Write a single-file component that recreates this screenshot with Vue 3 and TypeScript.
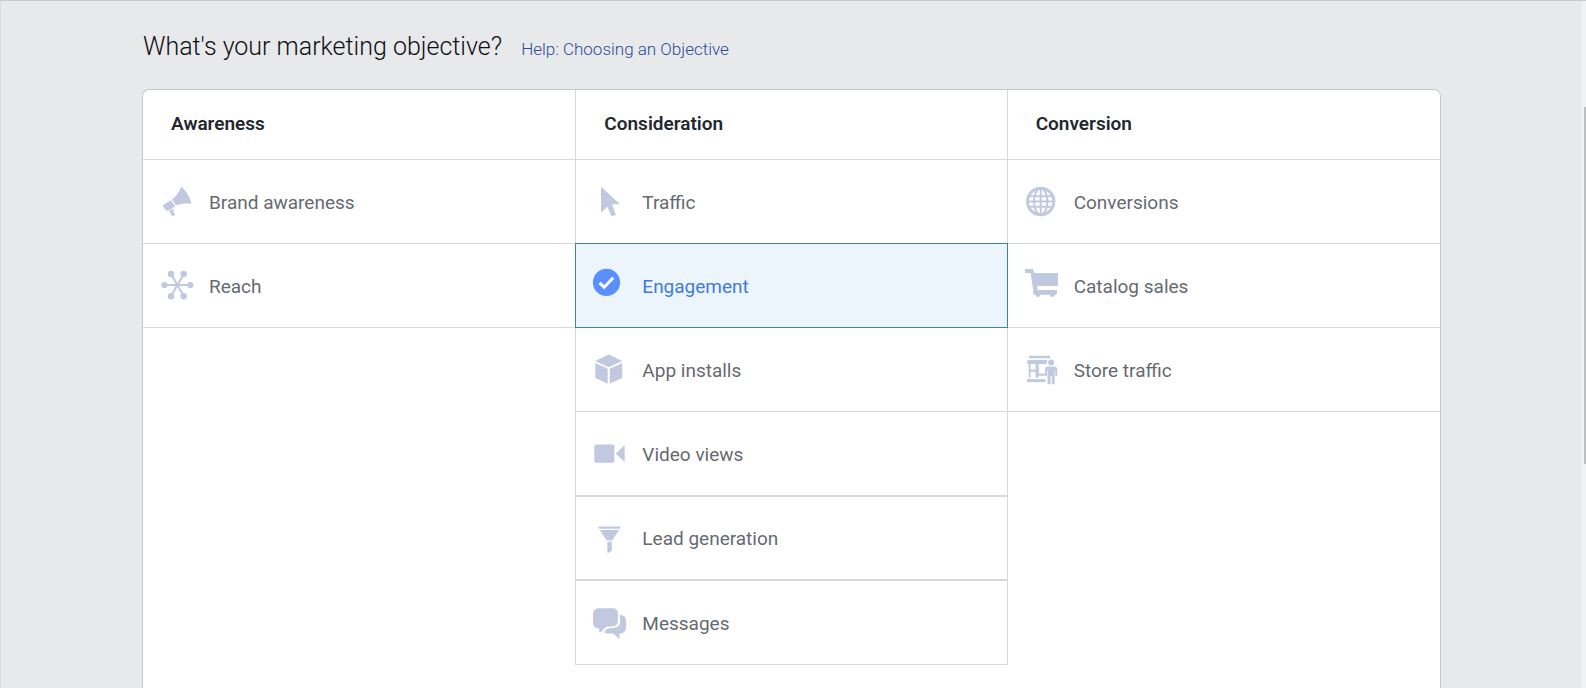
<script setup lang="ts">
import { ref } from 'vue'

interface Objective {
  id: string
  label: string
  doubleRule?: boolean
}

interface Category {
  title: string
  objectives: Objective[]
}

const categories: Category[] = [
  {
    title: 'Awareness',
    objectives: [
      { id: 'brand', label: 'Brand awareness' },
      { id: 'reach', label: 'Reach' },
    ],
  },
  {
    title: 'Consideration',
    objectives: [
      { id: 'traffic', label: 'Traffic' },
      { id: 'engagement', label: 'Engagement' },
      { id: 'app', label: 'App installs' },
      { id: 'video', label: 'Video views' },
      { id: 'lead', label: 'Lead generation', doubleRule: true },
      { id: 'messages', label: 'Messages', doubleRule: true },
    ],
  },
  {
    title: 'Conversion',
    objectives: [
      { id: 'conversions', label: 'Conversions' },
      { id: 'catalog', label: 'Catalog sales' },
      { id: 'store', label: 'Store traffic' },
    ],
  },
]

const selected = ref('engagement')
</script>

<template>
  <div class="page">
    <main class="content">
      <header class="heading">
        <h1>What's your marketing objective?</h1>
        <a href="#help">Help: Choosing an Objective</a>
      </header>

      <div class="card">
        <section v-for="category in categories" :key="category.title" class="column">
          <h2>{{ category.title }}</h2>
          <button
            v-for="item in category.objectives"
            :key="item.id"
            type="button"
            class="objective"
            :class="{ selected: item.id === selected, double: item.doubleRule }"
            :aria-pressed="item.id === selected"
            @click="selected = item.id"
          >
            <svg class="icon" viewBox="0 0 36 35" aria-hidden="true">
              <g v-if="item.id === selected">
                <circle class="disc" cx="14.5" cy="14.4" r="13.6" />
                <path class="tick" d="M7.6 14.8 12.2 19.2 21.2 9.8" />
              </g>
              <g v-else-if="item.id === 'brand'">
                <path d="M22 3.2c.6-.2 1.200 0 1.600.6 4 4.200 7.200 9.200 8.700 14.800.1.700-.3 1.100-1 1.100-4.700-.4-9.500.1-14.200 1.800L13 15.600c4-3.400 7-7.700 9-12.400z" />
                <path d="M11.900 16.200 16.300 22.400 9 26.600c-.9.500-1.800.3-2.400-.5l-2.200-3.200c-.5-.8-.4-1.700.4-2.300z" />
                <path d="M10 26.700l3.600-2 1.200 2.100-.6 1 1.800 2.500c.4.800-2.400 2.300-3 1.600z" />
              </g>
              <g v-else-if="item.id === 'reach'">
                <path class="spoke" d="M5.300 17H31.300M12 6 24.700 28M24.700 6 12 28" />
                <circle cx="5.300" cy="17" r="3.100" /><circle cx="31.300" cy="17" r="3.100" />
                <circle cx="12" cy="6" r="3.200" /><circle cx="24.700" cy="6" r="3.200" />
                <circle cx="12" cy="28.200" r="3.200" /><circle cx="24.700" cy="28.200" r="3.200" />
              </g>
              <path v-else-if="item.id === 'traffic'" d="M9 2.700 28 20.300H20L23.900 30.800 19.700 32.400 15.400 22.800 9 28.700z" />
              <g v-else-if="item.id === 'app'">
                <path d="M16.700 2.600 30.300 8.900 16.700 15.200 3.100 8.900z" />
                <path d="M3.300 11 15.700 16.800V31.700L3.300 25.900z" />
                <path d="M30.200 11 17.700 16.800V31.700L30.200 25.900z" />
              </g>
              <g v-else-if="item.id === 'video'">
                <rect x="2.300" y="8.400" width="20.100" height="18.300" rx="1.600" />
                <path d="M23.800 17.600 32 9.700q.7-.4.700.4V25q0 .8-.7.400z" />
              </g>
              <g v-else-if="item.id === 'lead'">
                <path d="M6 5.500H28.700L27.800 7.700H7z" />
                <path d="M7.700 9H27L20.300 19.200Q20 19.600 19.300 19.600H15.500Q15 19.600 14.600 19.200z" />
                <path d="M15.300 20.800H19.800V29.200L17.900 31.300Q17.500 31.700 15.300 31.700z" />
              </g>
              <g v-else-if="item.id === 'messages'">
                <path d="M7.300 3.200H20.500Q25.900 3.200 25.900 8.700V16.300Q25.900 20.800 20.500 21.200C16 21.300 13.700 21.800 12 23.500 10.800 25.300 9.500 27.100 7.600 27.500 7 27.500 7.300 26.400 7.300 23.300 3 23.200 1 21.300 1 17.400V9Q1 3.200 7.300 3.200z" />
                <path d="M28 9.900C32.500 10 34 12.200 34 16.500V22C34 26.500 31.500 28.500 27.300 28.600 27.300 31.500 28.200 33.700 27.300 33.700 24.300 32.500 22.900 28.700 20.600 28.600H15.300Q12.800 28.500 12.100 27.100C13.500 24.500 15.500 23.400 18.500 23.300 25 23.200 28 21.300 28 16.500z" />
              </g>
              <g v-else-if="item.id === 'conversions'" class="globe">
                <circle class="rim" cx="16.700" cy="17.500" r="13.200" />
                <ellipse cx="16.700" cy="17.500" rx="6.700" ry="13" />
                <path d="M16.700 4.500V30.500M4 17.500H29.400M5.500 12.300H27.900M5.500 22.800H27.900" />
              </g>
              <path
                v-else-if="item.id === 'catalog'"
                d="M1 1H9.200L10.200 4.900H34V17.900H13.200L13.700 21.900H33.200V24.200L32.300 26.700H30.800A2.400 2.400 0 0 1 26 26.700H16.200A2.400 2.400 0 0 1 11.400 26.700H10.200L9 25.500 9.400 23.500 6.600 4.900H1z"
              />
              <g v-else-if="item.id === 'store'">
                <path d="M5.300 3.700H26.200V6.200H4.700zM4.300 8H23.300L22.500 12H3.200V9.500z" />
                <path d="M4.700 12H6.600V17.500H11.600V12H14.800V21.500H20.800V23.800H14.300V25.500H11.600V19.700H6.600V25.500H4.700z" />
                <path d="M3 27.200H21.600V30.100H3z" />
                <circle cx="27.100" cy="10.500" r="3" />
                <path d="M24.200 14.600H30Q33.200 14.600 33.200 18V24H31.300V18.500H30.700V32.200H27.800V24.200H26.500V32.200H23.600V18.500H23V24H21.100V18Q21.100 14.600 24.200 14.600z" />
              </g>
            </svg>
            <span>{{ item.label }}</span>
          </button>
        </section>
      </div>
    </main>
    <div class="scroll-track"><div class="scroll-thumb"></div></div>
  </div>
</template>

<style>
body {
  margin: 0;
}
</style>

<style scoped>
.page {
  display: flex;
  box-sizing: border-box;
  height: 100vh;
  overflow: hidden;
  border-top: 1px solid #c8c9cb;
  border-left: 1px solid #d9dadc;
  background: #e8e9eb;
  font-family: Roboto, "Liberation Sans", sans-serif;
}

.content {
  display: flex;
  flex: 1;
  flex-direction: column;
  width: calc(100% - 52px);
  max-width: 1299px;
  margin: 0 auto;
}

.heading {
  display: flex;
  flex: none;
  align-items: baseline;
  gap: 19px;
  padding: 30px 0 26px 1px;
}

h1 {
  margin: 0;
  color: #0e1013;
  font-size: 25px;
  font-weight: 300;
  line-height: 32px;
}

.heading a {
  color: #2c4c96;
  font-size: 17px;
  font-weight: 300;
  line-height: 24px;
  text-decoration: none;
}

.card {
  display: grid;
  flex: 1 0 auto;
  grid-template-columns: repeat(3, minmax(0, 1fr));
  align-items: start;
  border: 1px solid #c6c8cb;
  border-bottom: 0;
  border-radius: 7px 7px 0 0;
  background: #fff;
}

.column {
  display: flex;
  flex-direction: column;
}

.column:nth-child(2) {
  border: solid #d6d8db;
  border-width: 0 1px;
}

h2 {
  margin: 0;
  padding: 22px 28px 23px;
  border-bottom: 1px solid #d6d8db;
  color: #23272f;
  font-size: 19px;
  font-weight: 600;
  line-height: 24px;
}

.objective {
  display: flex;
  box-sizing: border-box;
  align-items: center;
  gap: 14px;
  min-height: 84px;
  padding: 0 16px;
  border: 0;
  border-bottom: 1px solid #d6d8db;
  background: #fff;
  color: #666a70;
  font: inherit;
  font-size: 19px;
  line-height: 24px;
  text-align: left;
  cursor: pointer;
}

.objective span {
  padding-top: 2px;
}

.double {
  border-top: 1px solid #d6d8db;
}

.double:last-child {
  min-height: 85px;
}

.selected {
  margin: -1px -1px 0;
  min-height: 85px;
  border: 1px solid #3a80be;
  background: #ecf5fc;
  color: #3f7bda;
}

.icon {
  flex: none;
  width: 36px;
  height: 35px;
  fill: #c0c9e0;
}

.spoke {
  fill: none;
  stroke: #c0c9e0;
  stroke-width: 2;
}

.disc {
  fill: #5890ff;
}

.tick {
  fill: none;
  stroke: #fff;
  stroke-width: 3;
}

.globe {
  fill: none;
  stroke: #c0c9e0;
  stroke-width: 2;
}

.rim {
  stroke-width: 3;
}

.scroll-track {
  flex: none;
  width: 4px;
  padding: 106px 0 0 2px;
  box-sizing: border-box;
  background: #f1f2f3;
}

.scroll-thumb {
  height: 62%;
  min-height: 40px;
  max-height: 357px;
  background: #bdbebf;
}
</style>
